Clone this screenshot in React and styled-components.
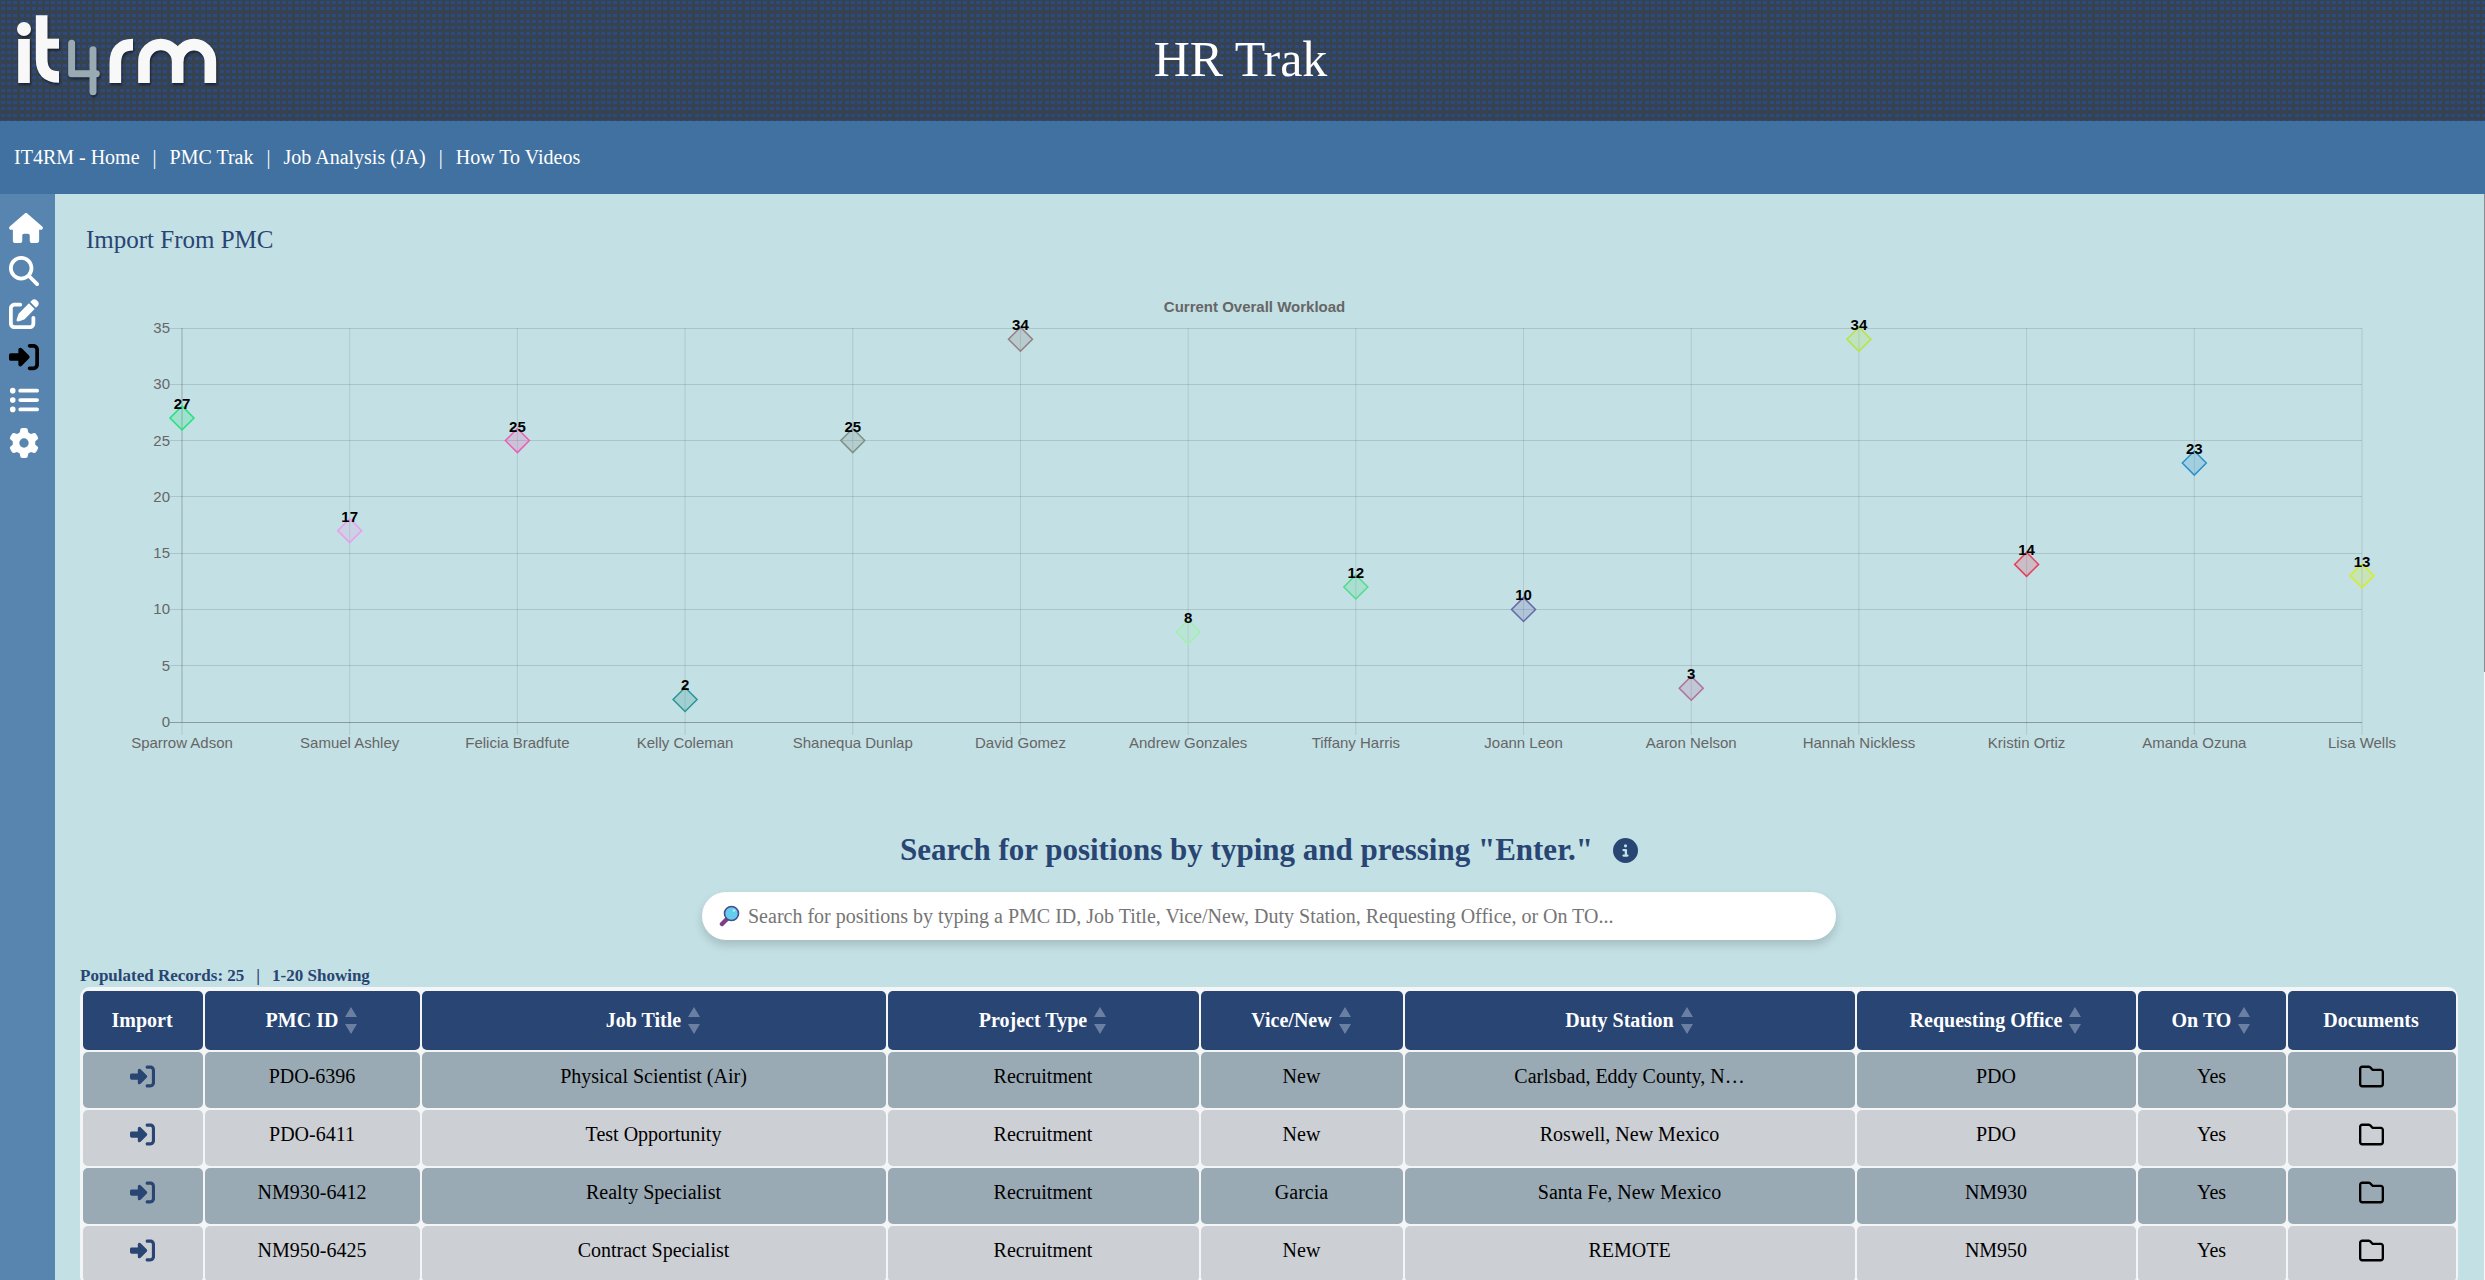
import React from "react";
import styled, { createGlobalStyle } from "styled-components";
import {
  FaHouse,
  FaMagnifyingGlass,
  FaPenToSquare,
  FaRightToBracket,
  FaListUl,
  FaGear,
  FaCircleInfo,
  FaRegFolder,
} from "react-icons/fa6";

const navy = "#284573";
const serif = '"Liberation Serif", "Times New Roman", serif';
const sans = '"Liberation Sans", Arial, sans-serif';

const GlobalStyle = createGlobalStyle`
  *, *::before, *::after { box-sizing: border-box; }
  body { margin: 0; font-family: ${serif}; font-size: 20px; background: #c3e0e4; }
  button { font: inherit; color: inherit; background: none; border: 0; padding: 0; cursor: pointer; }
`;

const Shell = styled.div`
  display: flex;
  flex-direction: column;
  height: 100vh;
  overflow: hidden;
`;

/* weave of small blue marks on slate, four to each 25px tile */
const Header = styled.header`
  display: grid;
  grid-template-columns: 1fr auto 1fr;
  align-items: center;
  flex: none;
  height: 121px;
  padding-right: 4px;
  background-color: #2d4a80;
  background-image:
    linear-gradient(90deg, #37424f 1px, transparent 1px 5px, #37424f 5px 7px, transparent 7px 11px, #37424f 11px 13px, transparent 13px 17px, #37424f 17px 20px, transparent 20px 24px, #37424f 24px),
    linear-gradient(#37424f 1px, transparent 1px 4px, #37424f 4px 7px, transparent 7px 10px, #37424f 10px 14px, transparent 14px 17px, #37424f 17px 20px, transparent 20px 23px, #37424f 23px);
  background-size: 25px 25px;
`;

const LogoLink = styled.a`
  display: block;
  svg {
    display: block;
    filter: drop-shadow(1px 2px 1px rgba(0, 0, 0, 0.5));
  }
`;

const AppTitle = styled.h1`
  margin: 0;
  padding-bottom: 3px;
  color: #fff;
  font-size: 50px;
  font-weight: 400;
  line-height: 56px;
`;

const TopNav = styled.nav`
  display: flex;
  align-items: center;
  gap: 13px;
  flex: none;
  height: 73px;
  padding: 0 14px;
  background: #4171a0;
  color: #fff;
`;

const NavLink = styled.a`
  color: inherit;
  text-decoration: none;
`;

const Body = styled.div`
  display: flex;
  flex: 1;
  min-height: 0;
`;

const Sidebar = styled.nav`
  display: flex;
  flex-direction: column;
  align-items: flex-start;
  gap: 13px;
  flex: none;
  width: 55px;
  padding: 19px 9px;
  background: #5885b0;
`;

const SideLink = styled.a`
  display: block;
  height: 30px;
  color: ${(p) => (p.$active ? "#000" : "#fff")};
  svg {
    display: block;
    width: ${(p) => (p.$wide ? 34 : 30)}px;
    height: 30px;
  }
`;

const Main = styled.main`
  position: relative;
  flex: 1;
  min-width: 0;
  overflow: hidden;
`;

const ScrollTrack = styled.div`
  position: absolute;
  inset: 0 0 0 auto;
  width: 1px;
  background: #f4f8f8;
`;

const ScrollThumb = styled.div`
  height: 44%;
  background: #858f92;
`;

const PageTitle = styled.h2`
  margin: 32px 0 0 31px;
  color: ${navy};
  font-size: 25px;
  font-weight: 400;
  line-height: 28px;
`;

const ChartFigure = styled.figure`
  margin: 39px 123px 0 127px;
`;

const Plot = styled.svg`
  display: block;
  width: 100%;
  height: 466px;
  overflow: visible;
  font-family: ${sans};
  font-size: 15px;
`;

const SearchSection = styled.section`
  display: flex;
  flex-direction: column;
  align-items: center;
  gap: 24px;
  margin-top: 73px;
  padding-right: 2px;
`;

const SearchHeading = styled.h2`
  display: flex;
  align-items: center;
  gap: 20px;
  margin: 0;
  color: ${navy};
  font-size: 31px;
  line-height: 36px;
`;

const InfoButton = styled.button`
  height: 30px;
  svg {
    display: block;
    width: 25px;
    height: 25px;
  }
`;

const SearchBox = styled.label`
  display: flex;
  align-items: center;
  gap: 8px;
  width: 1134px;
  max-width: 90%;
  height: 48px;
  padding: 0 17px;
  border-radius: 24px;
  background: #fff;
  box-shadow: 0 5px 10px rgba(0, 0, 0, 0.16);
  svg {
    flex: none;
  }
`;

const SearchInput = styled.input`
  flex: 1;
  min-width: 0;
  padding: 0;
  border: 0;
  outline: 0;
  background: none;
  color: #000;
  font: 20px ${serif};
  &::placeholder {
    color: #757575;
    opacity: 1;
  }
`;

const Records = styled.section`
  margin: 25px 27px 0 25px;
`;

const RecordCount = styled.p`
  display: flex;
  gap: 12px;
  margin: 0;
  color: ${navy};
  font-size: 17px;
  font-weight: 700;
  line-height: 22px;
`;

const TableFrame = styled.div`
  padding: 2px 1px;
  border-radius: 10px;
  background: #f4f5f6;
`;

const Table = styled.table`
  width: 100%;
  table-layout: fixed;
  border-collapse: separate;
  border-spacing: 2px;
  text-align: center;
`;

const HeadCell = styled.th`
  width: ${(p) => p.$width}px;
  height: 59px;
  padding: 0 2px 0 0;
  border-radius: 5px;
  background: ${navy};
  color: #fff;
  font-weight: 700;
`;

const HeadContent = styled.div`
  display: flex;
  align-items: center;
  justify-content: center;
  gap: 7px;
`;

const SortButton = styled.button`
  height: 27px;
  color: #6b7fa2;
  svg {
    display: block;
  }
`;

const Row = styled.tr`
  background: none;
  td {
    background: #cccfd4;
  }
  &:nth-child(odd) td {
    background: #9aaab4;
  }
`;

const Cell = styled.td`
  height: 56px;
  padding: 13px 9px 20px 8px;
  border-radius: 5px;
  line-height: 23px;
  vertical-align: top;
  white-space: nowrap;
  overflow: hidden;
`;

const CellButton = styled.button`
  display: flex;
  align-items: center;
  height: 23px;
  margin: 0 auto;
  color: ${(p) => (p.$dark ? "#000" : navy)};
  svg {
    flex: none;
    width: 25px;
    height: 25px;
  }
`;

const workload = [
  { name: "Sparrow Adson", value: 27, color: "#22e27e" },
  { name: "Samuel Ashley", value: 17, color: "#e9a0ea" },
  { name: "Felicia Bradfute", value: 25, color: "#ec5cb4" },
  { name: "Kelly Coleman", value: 2, color: "#2a9496" },
  { name: "Shanequa Dunlap", value: 25, color: "#7f8f86" },
  { name: "David Gomez", value: 34, color: "#937f83" },
  { name: "Andrew Gonzales", value: 8, color: "#a0f0b0" },
  { name: "Tiffany Harris", value: 12, color: "#4fdc8c" },
  { name: "Joann Leon", value: 10, color: "#6668a8" },
  { name: "Aaron Nelson", value: 3, color: "#b0709c" },
  { name: "Hannah Nickless", value: 34, color: "#b4e640" },
  { name: "Kristin Ortiz", value: 14, color: "#e8405c" },
  { name: "Amanda Ozuna", value: 23, color: "#2c90cc" },
  { name: "Lisa Wells", value: 13, color: "#d4ee20" },
];

const plotTop = 35;
const plotBottom = 429;
const maxValue = 35;
const yOf = (v) => plotBottom - (v / maxValue) * (plotBottom - plotTop);
const xOf = (i) => `${(i / (workload.length - 1)) * 100}%`;
const crisp = (v) => Math.floor(v) + 0.5;

function WorkloadChart() {
  const ticks = [35, 30, 25, 20, 15, 10, 5, 0];
  return (
    <ChartFigure>
      <Plot role="img" aria-label="Current Overall Workload">
        <text x="49.2%" y="19" textAnchor="middle" fontWeight="700" fill="#666">
          Current Overall Workload
        </text>
        {ticks.map((t) => (
          <g key={t}>
            <line x1="-12" x2="100%" y1={crisp(yOf(t))} y2={crisp(yOf(t))} stroke="#000" strokeOpacity={t ? 0.12 : 0.3} />
            <text x="-12" y={Math.round(yOf(t)) + 5} textAnchor="end" fill="#666">
              {t}
            </text>
          </g>
        ))}
        {workload.map((p, i) => (
          <g key={p.name}>
            <line x1={xOf(i)} x2={xOf(i)} y1={plotTop} y2={plotBottom + 13} stroke="#000" strokeOpacity="0.1" />
            <text x={xOf(i)} y="455" textAnchor="middle" fill="#666">
              {p.name}
            </text>
          </g>
        ))}
        <line x1="0" x2="0" y1={plotTop} y2={plotBottom} stroke="#000" strokeOpacity="0.15" />
        {workload.map((p, i) => (
          <svg key={p.name} x={xOf(i)} y={yOf(p.value)} overflow="visible">
            <path d="M0-12L12 0L0 12L-12 0Z" fill={p.color} fillOpacity="0.22" stroke={p.color} strokeWidth="1.5" />
            <text y="-9" textAnchor="middle" fontWeight="700" fill="#000">
              {p.value}
            </text>
          </svg>
        ))}
      </Plot>
    </ChartFigure>
  );
}

function Logo() {
  return (
    <svg width="240" height="121" viewBox="0 0 720 363" fill="none" aria-hidden="true">
      <g stroke="#9aaab3" strokeWidth="21" strokeLinecap="round" strokeLinejoin="round">
        <path d="M215 130V221H289" />
        <path d="M279 149V275" />
      </g>
      <g stroke="#f8f8f8" strokeWidth="35">
        <path d="M72 117V249" />
        <path d="M125 46V178Q125 231 177 231" />
        <path d="M140 131H177" strokeWidth="30" />
        <path d="M346 249V190Q346 134 399 134" />
        <path d="M432 249V184A50 50 0 0 1 533 184V249" />
        <path d="M533 184A49 50 0 0 1 631 184V249" />
      </g>
      <circle cx="72" cy="87" r="21" fill="#f8f8f8" />
    </svg>
  );
}

function Magnifier() {
  return (
    <svg width="21" height="22" viewBox="0 0 21 22" aria-hidden="true">
      <path d="M3 19L8 14" stroke="#7b3f86" strokeWidth="4.5" strokeLinecap="round" />
      <circle cx="12.5" cy="8.5" r="7" fill="#62cdec" stroke="#4a4a8c" strokeWidth="1.6" />
      <circle cx="15" cy="5.5" r="1.3" fill="#b8ecfa" />
    </svg>
  );
}

const columns = [
  { label: "Import", width: 120 },
  { label: "PMC ID", width: 215, sort: true },
  { label: "Job Title", width: 464, sort: true },
  { label: "Project Type", width: 311, sort: true },
  { label: "Vice/New", width: 202, sort: true },
  { label: "Duty Station", width: 450, sort: true },
  { label: "Requesting Office", width: 279, sort: true },
  { label: "On TO", width: 148, sort: true },
  { label: "Documents", width: 168 },
];

const rows = [
  ["PDO-6396", "Physical Scientist (Air)", "Recruitment", "New", "Carlsbad, Eddy County, N…", "PDO", "Yes"],
  ["PDO-6411", "Test Opportunity", "Recruitment", "New", "Roswell, New Mexico", "PDO", "Yes"],
  ["NM930-6412", "Realty Specialist", "Recruitment", "Garcia", "Santa Fe, New Mexico", "NM930", "Yes"],
  ["NM950-6425", "Contract Specialist", "Recruitment", "New", "REMOTE", "NM950", "Yes"],
];

const navItems = ["IT4RM - Home", "PMC Trak", "Job Analysis (JA)", "How To Videos"];

const sideItems = [
  { label: "Home", Icon: FaHouse, wide: true },
  { label: "Search", Icon: FaMagnifyingGlass },
  { label: "Edit", Icon: FaPenToSquare },
  { label: "Import", Icon: FaRightToBracket, active: true },
  { label: "Lists", Icon: FaListUl },
  { label: "Settings", Icon: FaGear },
];

export default function App() {
  return (
    <Shell>
      <GlobalStyle />
      <Header>
        <LogoLink href="#" aria-label="it4rm">
          <Logo />
        </LogoLink>
        <AppTitle>HR Trak</AppTitle>
      </Header>
      <TopNav>
        {navItems.map((item, i) => (
          <React.Fragment key={item}>
            {i > 0 && <span>|</span>}
            <NavLink href="#">{item}</NavLink>
          </React.Fragment>
        ))}
      </TopNav>
      <Body>
        <Sidebar>
          {sideItems.map(({ label, Icon, active, wide }) => (
            <SideLink key={label} href="#" aria-label={label} $active={active} $wide={wide}>
              <Icon />
            </SideLink>
          ))}
        </Sidebar>
        <Main>
          <PageTitle>Import From PMC</PageTitle>
          <WorkloadChart />
          <SearchSection>
            <SearchHeading>
              Search for positions by typing and pressing "Enter."
              <InfoButton aria-label="Search help">
                <FaCircleInfo />
              </InfoButton>
            </SearchHeading>
            <SearchBox>
              <Magnifier />
              <SearchInput
                type="text"
                aria-label="Search for positions"
                placeholder="Search for positions by typing a PMC ID, Job Title, Vice/New, Duty Station, Requesting Office, or On TO..."
              />
            </SearchBox>
          </SearchSection>
          <Records>
            <RecordCount>
              <span>Populated Records: 25</span>
              <span>|</span>
              <span>1-20 Showing</span>
            </RecordCount>
            <TableFrame>
              <Table>
                <thead>
                  <tr>
                    {columns.map((c) => (
                      <HeadCell key={c.label} $width={c.width} scope="col">
                        <HeadContent>
                          {c.label}
                          {c.sort && (
                            <SortButton aria-label={`Sort by ${c.label}`}>
                              <svg width="12" height="27" viewBox="0 0 12 27" fill="currentColor">
                                <path d="M6 0L12 10H0Z" />
                                <path d="M0 17H12L6 27Z" />
                              </svg>
                            </SortButton>
                          )}
                        </HeadContent>
                      </HeadCell>
                    ))}
                  </tr>
                </thead>
                <tbody>
                  {rows.map((r) => (
                    <Row key={r[0]}>
                      <Cell>
                        <CellButton aria-label={`Import ${r[0]}`}>
                          <FaRightToBracket />
                        </CellButton>
                      </Cell>
                      {r.map((value, i) => (
                        <Cell key={i}>{value}</Cell>
                      ))}
                      <Cell>
                        <CellButton $dark aria-label={`Documents for ${r[0]}`}>
                          <FaRegFolder />
                        </CellButton>
                      </Cell>
                    </Row>
                  ))}
                </tbody>
              </Table>
            </TableFrame>
          </Records>
          <ScrollTrack>
            <ScrollThumb />
          </ScrollTrack>
        </Main>
      </Body>
    </Shell>
  );
}
